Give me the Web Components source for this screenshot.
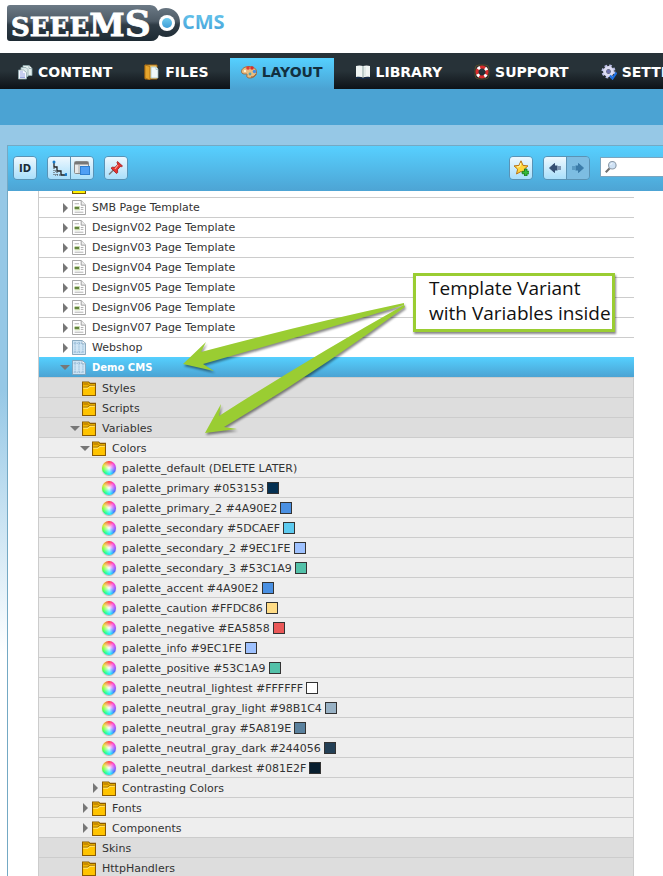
<!DOCTYPE html>
<html lang="en">
<head>
<meta charset="utf-8">
<title>Seeems CMS – Layout</title>
<style>
html{height:100%}
body{margin:0;min-height:100%;height:100vh;overflow:hidden;background:#fff;color:#333;font-family:"DejaVu Sans",Verdana,sans-serif;font-size:11px}
</style>
</head>
<body>
<cms-app></cms-app>
<script>
const ICONS = {
  pages: `<g stroke="#8fa9ad" stroke-width=".8"><path d="M6 1.500h6l3 3v7H6z" fill="#e4efee"/><path d="M12 1.500v3h3" fill="#fff"/><path d="M4 3.500h5l2 2v7H4z" fill="#dce9ea"/><path d="M1.500 6h5l3 2.500v6.500h-8z" fill="#f4f6ff"/></g><path d="M3 8h3M3 10h5M3 12h5M3 13.500h5" stroke="#9ba7e0"/>`,
  files: `<path d="M1 1h12v14H1z" fill="#fbd06a" stroke="#a86b10"/><path d="M1 1l5 1.500V16l-5-2z" fill="#e6a52c" stroke="#a86b10" stroke-width=".8"/><path d="M7 3h5l2 2v9H7z" fill="#eef7f8" stroke="#9bbbc0" stroke-width=".7"/><path d="M12 3v2.500h2" fill="#fff" stroke="#9bbbc0" stroke-width=".7"/>`,
  palette: `<path d="M8 2.500c5 0 7.500 2.500 7.500 5.500 0 4-3 6-7 6-2 0-3.500-1.500-2.500-3 .6-1.200-1-1-2.500-1C1.500 10 .5 9 .5 7.500.5 4.500 4 2.500 8 2.500z" fill="#e9bd80" stroke="#9c6435" stroke-width=".9"/><circle cx="7" cy="4" r="1.800" fill="#e33b36"/><circle cx="11" cy="4" r="1.800" fill="#d82d2d"/><circle cx="13.500" cy="7.500" r="1.800" fill="#468ee6"/><circle cx="9" cy="10" r="1.400" fill="#53a5b0"/><circle cx="4" cy="7" r="1.200" fill="#fff2d4"/><path d="M10 13c2 0 4-1 5-3" stroke="#9c6435" fill="none"/>`,
  book: `<path d="M1 2c2-.7 5-.7 7 0 2-.7 5-.7 7 0v11c-2-.5-5-.5-7 .5-2-1-5-1-7-.5z" fill="#f0f5f3"/><path d="M1 14c3-.6 5-.3 7 .8 2-1.100 4-1.400 7-.8" fill="none" stroke="#12305a"/><path d="M8 2v11.500" stroke="#8ba2a0"/><path d="M10 3v9" stroke="#d2dfdc"/>`,
  ring: `<rect x="1" y="1" width="14" height="14" rx="4" fill="none" stroke="#5e5426" stroke-width=".8"/><circle cx="8" cy="8" r="5" fill="none" stroke="#d92b2b" stroke-width="3"/><circle cx="8" cy="8" r="5" fill="none" stroke="#fff" stroke-width="3" stroke-dasharray="2.600 5.254" stroke-dashoffset="5.200"/>`,
  gear: `<circle cx="7.500" cy="7.500" r="5.500" fill="none" stroke="#b9bce4" stroke-width="3" stroke-dasharray="2.400 1.920"/><circle cx="7.500" cy="7.500" r="3.800" fill="none" stroke="#dcdcf2" stroke-width="3.200"/><circle cx="7.500" cy="7.500" r="2" fill="#6d70ad"/><path d="M9 11.500l2.500 3 4-6" fill="none" stroke="#1d6fe0" stroke-width="2.200"/>`,
  steps: `<path d="M3 2v5h3v4h4v4h5" fill="none" stroke="#222" stroke-width="1.300"/><path d="M3 8v7M6 12v3M4 15h6M4 11h2" fill="none" stroke="#444" stroke-dasharray="1 1"/><circle cx="3" cy="2" r="1.500" fill="#1679c8"/><circle cx="15" cy="14.500" r="1.500" fill="#1679c8"/>`,
  windows: `<rect x=".5" y="1.500" width="14" height="12" rx="1" fill="#e9e9e9" stroke="#8a8a8a"/><path d="M1 2h13v2.500H1z" fill="#777"/><path d="M5 5v8" stroke="#aaa"/><rect x="6.500" y="6.500" width="9" height="8" fill="#4f9ff5" stroke="#2f7fd0"/>`,
  pin: `<path d="M5.500 10L1 14.500" stroke="#777" stroke-width="1.400"/><path d="M9.500 1.500l5 4.500-1.300.8-1-.3-2.700 3.200.2 2.800-1.200 1L3 8.200l1.200-1 2.900.1 2.700-3.100-.8-1.500z" fill="#e5322f" stroke="#9c1b1b" stroke-width=".8"/><path d="M10 5l-3 4" stroke="#ff9c90" stroke-width="1.200"/>`,
  star: `<path d="M8 .8l2 4.600 5 .5-3.700 3.300 1 4.800L8 11.500 3.500 14l1.100-4.800L1 5.900l5-.5z" fill="#ffd63c" stroke="#b9741a"/><path d="M7.800 3L6.800 6.500 4 7" stroke="#fff6b8" fill="none"/><path d="M11.500 9h2.500v2.300h2.500v2.500H14V16h-2.500v-2.200H9.200v-2.500h2.300z" fill="#35b93a" stroke="#0f7415" stroke-width=".8"/>`,
  back: `<path d="M2.500 8l5-4.500V6h3v4h-3v2.500z" fill="#354f73" stroke="#354f73" stroke-linejoin="round"/><path d="M10 6h4v4h-4z" fill="#7f98b4"/>`,
  forward: `<path d="M13.500 8l-5-4.500V6h-3v4h3v2.500z" fill="#3b7ba8" stroke="#3b7ba8" stroke-linejoin="round"/><path d="M2 6h4v4H2z" fill="#5b9cc4"/>`,
  search: `<path d="M6.500 9.500L2 14" stroke="#6f6f6f" stroke-width="2.400"/><circle cx="9.500" cy="6" r="4.300" fill="#cfe2f5" stroke="#8c9aa8" stroke-width="1.300"/><path d="M7.500 5.500c.3-1 1-1.600 2-1.600" stroke="#fff" fill="none"/>`,
  page: `<path d="M.5.5h10l5 5v10H.5z" fill="#fff" stroke="#9a9a9a"/><path d="M10.500.5v5h5" fill="#eee" stroke="#9a9a9a"/><path d="M3 4h5M10 8h3M10 10h3M3 13h10" stroke="#aaa"/><rect x="3" y="6.500" width="6" height="4.500" fill="#c3d6a8"/><path d="M3 7.500h5v2H3z" fill="#5d7f37"/>`,
  site: `<path d="M.5.5h11l4 3v12H.5z" fill="#cfe5f5" stroke="#7e9fb6"/><path d="M11.500 1v3h4" fill="#fff" stroke="#7e9fb6" stroke-width=".7"/><path d="M2 3.500h9M2 13h12M3.500 2v12M8 2v12M12.500 4v10" stroke="#6597bd" stroke-width=".8" stroke-dasharray="1 1"/>`,
  folder: `<path d="M.6 1h7l1.600 1.500h6.200v12.900H.6z" fill="#ffc400" stroke="#8a5a00" stroke-width="1.200"/><path d="M1.500 2H7l1.500 2.500H1.500z" fill="#c98a00"/><path d="M1.500 6.500h5l2-2h6" fill="none" stroke="#8a5a00"/><path d="M1.500 7.700h5.500l2-2h5.500" fill="none" stroke="#ffe98a"/>`,
  yellow: `<path d="M.6 0h14.800v15.400H.6z" fill="#fff000" stroke="#7a5a00" stroke-width="1.200"/>`
};
const svg = (n, w = 16, h = w) => `<svg width="${w}" height="${h}" viewBox="0 0 16 16" preserveAspectRatio="none" aria-hidden="true">${ICONS[n]}</svg>`;

function define(name, html) {
  customElements.define(name, class extends HTMLElement {
    constructor() {
      super();
      this.attachShadow({mode: 'open'}).innerHTML = typeof html === 'function' ? html(this) : html;
    }
  });
}

define('cms-logo', `<style>:host{display:block;height:53px;background:#fff}svg{display:block}</style>
<svg width="240" height="53" role="img" aria-label="Seeems CMS">
<defs><linearGradient id="g" x1="0" y1="0" x2="0" y2="1"><stop offset="0" stop-color="#6c7a86"/><stop offset=".45" stop-color="#4e5b66"/><stop offset=".55" stop-color="#2f3c46"/><stop offset="1" stop-color="#1d2a33"/></linearGradient>
<linearGradient id="b" x1="0" y1="0" x2="0" y2="1"><stop offset="0" stop-color="#6fccf0"/><stop offset="1" stop-color="#3f9dd6"/></linearGradient></defs>
<path d="M10 5h140q6 0 8 6 3-3 8-3 6 0 10 4 4 4 4 11 0 6-4 10-4 4-10 4-4 0-7-2-2 6-8 6H10q-3 0-3-3V8q0-3 3-3z" fill="url(#g)"/>
<text x="11" y="36" font-family="DejaVu Serif" font-weight="700" fill="#fff" stroke="#fff" stroke-width=".8"><tspan font-size="26">SEEE</tspan><tspan font-size="32">M</tspan><tspan font-size="36">S</tspan></text>
<circle cx="167" cy="23" r="8" fill="#fff"/><circle cx="167" cy="23" r="5" fill="url(#b)"/>
<text x="182" y="29" font-family="Open Sans" font-weight="700" font-size="20" fill="url(#b)">CMS</text>
</svg>`);

define('nav-tab', el => `<style>:host{display:block;flex:none}
a{display:flex;align-items:center;gap:5px;height:28px;padding:0 11px 3px;color:#fff;text-decoration:none;font-size:14px;font-weight:700;white-space:nowrap}
a[aria-current]{background:linear-gradient(#55d0ff,#4ba3d3);color:#12303f}svg{flex:none}</style>
<a href="#"${el.hasAttribute('active') ? ' aria-current="page"' : ''}>${svg(el.getAttribute('icon'))}<slot></slot></a>`);

define('main-nav', `<style>:host{display:block}nav{display:flex;align-items:flex-end;gap:10px;height:36px;padding-left:6px;overflow:hidden;background:linear-gradient(#273238 50%,#0d1217)}
div{height:36px;background:#4ba3d3}</style><nav><slot></slot></nav><div></div>`);

define('tool-group', `<style>:host{display:flex;flex:none;border:1px solid #5a93b5;border-radius:4px;overflow:hidden}</style><slot></slot>`);

define('tool-button', el => `<style>:host{display:block}:host(:not(:first-child)){border-left:1px solid #5a93b5}
button{display:grid;place-items:center;width:22px;height:22px;padding:0;border:0;background:linear-gradient(#eef8fe,#a9dffb);font:700 10px "DejaVu Sans",sans-serif;color:#1b2c38}
button:disabled{background:#7dbde2}</style>
<button type="button" aria-label="${el.getAttribute('label')}"${el.hasAttribute('disabled') ? ' disabled' : ''}>${el.hasAttribute('icon') ? svg(el.getAttribute('icon')) : '<slot></slot>'}</button>`);

define('search-box', `<style>:host{display:block;flex:none;width:63px}label{display:flex;align-items:center;height:18px;padding-left:3px;background:#fff;border:1px solid #7aa5bf;border-right:0}
svg{flex:none}input{flex:1;min-width:0;border:0;padding:0 4px;background:none;font:inherit;outline:0}</style><label>${svg('search', 14)}<input type="search" aria-label="Search"></label>`);

define('tool-bar', `<style>:host{display:flex;align-items:flex-start;gap:10px;height:35px;padding:10px 0 0 5px;background:linear-gradient(#57d0ff,#4da4d4)}
.space{flex:1}search-box{padding-top:1px}</style>
<tool-group><tool-button label="ID">ID</tool-button></tool-group>
<tool-group><tool-button icon="steps" label="Tree view"></tool-button><tool-button icon="windows" label="Window view"></tool-button></tool-group>
<tool-group><tool-button icon="pin" label="Pin"></tool-button></tool-group>
<span class="space"></span>
<tool-group><tool-button icon="star" label="Add favourite"></tool-button></tool-group>
<tool-group><tool-button icon="back" label="Back"></tool-button><tool-button icon="forward" label="Forward" disabled></tool-button></tool-group>
<search-box></search-box>`);

define('tree-row', el => {
  const arrow = el.getAttribute('arrow'), icon = el.getAttribute('icon'), colour = el.getAttribute('colour');
  return `<style>
:host{display:flex;align-items:center;box-sizing:border-box;height:20px;padding-left:calc(21px + 10px * var(--depth));border-top:1px solid #ccc;background:#fff;white-space:nowrap}
:host([depth="0"]){--depth:0}:host([depth="1"]){--depth:1}:host([depth="2"]){--depth:2}:host([depth="3"]){--depth:3}
:host([tone]){padding-top:1px;border-right:1px solid #ccc;background:#ddd}
:host([tone="light"]){background:#eee}
:host([selected]){border:0;background:linear-gradient(#55d0ff,#4ba3d3);color:#fff;font-size:10px;font-weight:700}
:host([clipped]){height:6px;border:0;align-items:flex-end;overflow:hidden}
:host([clipped]) .icon{margin-bottom:3px}
button{flex:none;width:12px;height:16px;padding:0;border:0;background:none;display:grid;place-items:center}
:host([arrow="open"]) button{justify-content:end;padding-right:2px}
.none{flex:none;width:12px}.icon{flex:none;width:14px;height:15px;margin-right:6px}
.icon svg{display:block}
.wheel{border-radius:50%;height:14px;background:radial-gradient(circle,#fff,#fff8 30%,#fff0 70%),conic-gradient(#f33,#f3c 45deg,#94f 90deg,#36f 125deg,#0ef 170deg,#0f8 215deg,#6f2 260deg,#dd2 300deg,#f33);box-shadow:0 1px 1px #8889}
i{width:10px;height:10px;margin-left:3px;border:1px solid #333;background:${colour || 'none'}}
</style>
${arrow ? `<button type="button" aria-label="${arrow === 'open' ? 'Collapse' : 'Expand'}"><svg width="10" height="10" aria-hidden="true"><path d="${arrow === 'open' ? 'M0 3h10L5 8z' : 'M2 0v10l5-5z'}" fill="#777"/></svg></button>` : '<span class="none"></span>'}
${icon === 'wheel' ? '<span class="icon wheel"></span>' : `<span class="icon">${svg(icon, 14, 15)}</span>`}
<slot></slot>${colour ? '<i></i>' : ''}`;
});

const top_ = ['SMB Page Template', ...[2, 3, 4, 5, 6, 7].map(n => `DesignV0${n} Page Template`)];
const colours = [['primary', '053153'], ['primary_2', '4A90E2'], ['secondary', '5DCAEF'], ['secondary_2', '9EC1FE'], ['secondary_3', '53C1A9'], ['accent', '4A90E2'], ['caution', 'FFDC86'], ['negative', 'EA5858'], ['info', '9EC1FE'], ['positive', '53C1A9'], ['neutral_lightest', 'FFFFFF'], ['neutral_gray_light', '98B1C4'], ['neutral_gray', '5A819E'], ['neutral_gray_dark', '244056'], ['neutral_darkest', '081E2F']];
const row = (depth, icon, text, attrs = '') => `<tree-row depth="${depth}" icon="${icon}" ${attrs}>${text}</tree-row>`;

define('template-tree', `<style>:host{display:block;margin:0 29px 0 30px;border-left:1px solid #ccc}</style>
${row(0, 'yellow', '', 'clipped')}
${top_.map(t => row(0, 'page', t, 'arrow="closed"')).join('')}
${row(0, 'site', 'Webshop', 'arrow="closed"')}
${row(0, 'site', 'Demo CMS', 'arrow="open" selected')}
${row(1, 'folder', 'Styles', 'tone="dark"')}${row(1, 'folder', 'Scripts', 'tone="dark"')}
${row(1, 'folder', 'Variables', 'tone="dark" arrow="open"')}
${row(2, 'folder', 'Colors', 'tone="light" arrow="open"')}
${row(3, 'wheel', 'palette_default (DELETE LATER)', 'tone="light"')}
${colours.map(([n, c]) => row(3, 'wheel', `palette_${n} #${c}`, `tone="light" colour="#${c}"`)).join('')}
${row(3, 'folder', 'Contrasting Colors', 'tone="light" arrow="closed"')}
${row(2, 'folder', 'Fonts', 'tone="light" arrow="closed"')}${row(2, 'folder', 'Components', 'tone="light" arrow="closed"')}
${row(1, 'folder', 'Skins', 'tone="dark"')}${row(1, 'folder', 'HttpHandlers', 'tone="dark"')}`);

define('note-callout', `<style>:host{position:absolute;left:0;top:0;pointer-events:none}
svg{display:block;filter:drop-shadow(1px 2px 1px #0007)}
p{position:absolute;left:413px;top:273px;margin:0;padding:0 1px 3px 13px;border:3px solid #9acd32;background:#fff;box-shadow:1px 2px 2px #0007;font:19px/25px "Open Sans",sans-serif;color:#111;white-space:nowrap}</style>
<svg width="420" height="450" aria-hidden="true"><g fill="#9acd32"><path d="M183 364L206 342 201 352Q310 323 404 303V305Q310 334 203 364L214 371Z"/><path d="M205 433L221 404 219 416Q310 358 404 305L405 307Q320 370 224 427L237 429Z"/></g></svg>
<p>Template Variant<br>with Variables inside</p>`);

define('cms-app', `<style>:host{display:flex;flex-direction:column;position:relative;min-height:100vh}
main{flex:1;padding:20px 0 0 7px;background:linear-gradient(#96c8e6 265px,#fff 530px)}
section{min-height:100%;background:#fff;border:solid #74a9c4;border-width:1px 0 0 1px}</style>
<cms-logo></cms-logo>
<main-nav><nav-tab icon="pages">CONTENT</nav-tab><nav-tab icon="files">FILES</nav-tab><nav-tab icon="palette" active>LAYOUT</nav-tab><nav-tab icon="book">LIBRARY</nav-tab><nav-tab icon="ring">SUPPORT</nav-tab><nav-tab icon="gear">SETTINGS</nav-tab></main-nav>
<main><section><tool-bar></tool-bar><template-tree></template-tree></section></main>
<note-callout></note-callout>`);
</script>
</body>
</html>
